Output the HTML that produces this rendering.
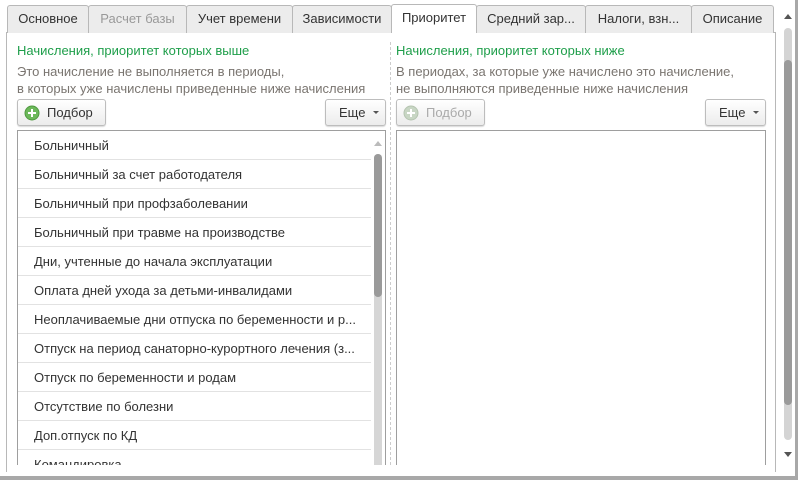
<!DOCTYPE html>
<html style="width:798px;height:480px;overflow:hidden"><head><meta charset="utf-8"><style>
*{box-sizing:border-box;margin:0;padding:0}
body{width:798px;height:480px;background:#fff;font-family:"Liberation Sans",Arial,sans-serif;font-size:13px;color:#333;position:relative;overflow:hidden}
.abs{position:absolute}
.tab{position:absolute;top:5px;height:28px;background:#ececec;border:1px solid #b8b8b8;border-bottom:none;border-radius:3px 3px 0 0;text-align:center;line-height:26px;color:#333;font-size:13px}
.tab.act{background:#fff;top:4px;height:29px;z-index:2}
.panel{position:absolute;left:6px;top:32px;width:770px;height:440px;border:1px solid #b8b8b8;border-bottom:none;background:#fff}
.green{color:#1e9e4a}
.note{color:#7a7570;line-height:17px}
.btn{position:absolute;height:27px;border:1px solid #bdbdbd;border-radius:3px;background:linear-gradient(#fff,#ececec);box-shadow:0 1px 1px rgba(0,0,0,.15);line-height:25px;font-size:13px}
.list{position:absolute;top:130px;height:335px;border:1px solid #9e9e9e;border-bottom:none;background:#fff;overflow:hidden}
.row{height:29px;line-height:29px;padding-left:16px;border-bottom:1px solid #e2e2e2;width:353px;white-space:nowrap;overflow:hidden}
</style></head><body>
<div class="panel"></div>
<div class="tab" style="left:7px;width:82px">Основное</div>
<div class="tab" style="left:88px;width:99px;color:#999">Расчет базы</div>
<div class="tab" style="left:186px;width:107px">Учет времени</div>
<div class="tab" style="left:292px;width:100px">Зависимости</div>
<div class="tab act" style="left:391px;width:86px">Приоритет</div>
<div class="tab" style="left:476px;width:110px">Средний зар...</div>
<div class="tab" style="left:585px;width:107px">Налоги, взн...</div>
<div class="tab" style="left:691px;width:83px">Описание</div>

<div class="abs green" style="left:17px;top:43px">Начисления, приоритет которых выше</div>
<div class="abs note" style="left:17px;top:63px">Это начисление не выполняется в периоды,<br>в которых уже начислены приведенные ниже начисления</div>
<div class="abs green" style="left:396px;top:43px">Начисления, приоритет которых ниже</div>
<div class="abs note" style="left:396px;top:63px">В периодах, за которые уже начислено это начисление,<br>не выполняются приведенные ниже начисления</div>

<div class="abs" style="left:390px;top:42px;height:423px;border-left:1px dashed #ccc"></div>

<div class="btn" style="left:17px;top:99px;width:89px"><svg class="abs" style="left:6px;top:5px" width="16" height="16"><circle cx="8" cy="8" r="7" fill="#6cb85a" stroke="#4e9a3e"/><path d="M8 4v8M4 8h8" stroke="#fff" stroke-width="2"/></svg><span class="abs" style="left:29px">Подбор</span></div>
<div class="btn" style="left:325px;top:99px;width:61px"><span class="abs" style="left:13px">Еще</span><span class="abs" style="left:47px;top:11px;border:3px solid transparent;border-top:3px solid #555;width:0;height:0"></span></div>
<div class="btn" style="left:396px;top:99px;width:89px;color:#aaa"><svg class="abs" style="left:6px;top:5px" width="16" height="16"><circle cx="8" cy="8" r="7" fill="#c8d6c4" stroke="#b5c4b0"/><path d="M8 4v8M4 8h8" stroke="#fff" stroke-width="2"/></svg><span class="abs" style="left:29px">Подбор</span></div>
<div class="btn" style="left:705px;top:99px;width:61px"><span class="abs" style="left:13px">Еще</span><span class="abs" style="left:47px;top:11px;border:3px solid transparent;border-top:3px solid #555;width:0;height:0"></span></div>

<div class="list" style="left:17px;width:369px">
<div class="row">Больничный</div>
<div class="row">Больничный за счет работодателя</div>
<div class="row">Больничный при профзаболевании</div>
<div class="row">Больничный при травме на производстве</div>
<div class="row">Дни, учтенные до начала эксплуатации</div>
<div class="row">Оплата дней ухода за детьми-инвалидами</div>
<div class="row">Неоплачиваемые дни отпуска по беременности и р...</div>
<div class="row">Отпуск на период санаторно-курортного лечения (з...</div>
<div class="row">Отпуск по беременности и родам</div>
<div class="row">Отсутствие по болезни</div>
<div class="row">Доп.отпуск по КД</div>
<div class="row">Командировка</div>
<div class="abs" style="left:356px;top:10px;border:4px solid transparent;border-bottom:5px solid #bbb;width:0;height:0;border-top:0"></div>
<div class="abs" style="left:356px;top:23px;width:8px;height:330px;background:#d6d6d6;border-radius:4px"></div>
<div class="abs" style="left:356px;top:23px;width:8px;height:143px;background:#9a9a9a;border-radius:4px"></div>
</div>
<div class="list" style="left:396px;width:370px"></div>

<div class="abs" style="left:795px;top:0;width:3px;height:480px;background:#a8a8a8"></div>
<div class="abs" style="left:0;top:476px;width:798px;height:4px;background:#a8a8a8"></div>
<div class="abs" style="left:784px;top:14px;border:4px solid transparent;border-bottom:5px solid #555;border-top:0;width:0;height:0"></div>
<div class="abs" style="left:784px;top:28px;width:8px;height:412px;background:#d4d4d4;border-radius:4px"></div>
<div class="abs" style="left:784px;top:60px;width:8px;height:345px;background:#9a9a9a;border-radius:4px"></div>
<div class="abs" style="left:784px;top:452px;border:4px solid transparent;border-top:5px solid #555;border-bottom:0;width:0;height:0"></div>
</body></html>
